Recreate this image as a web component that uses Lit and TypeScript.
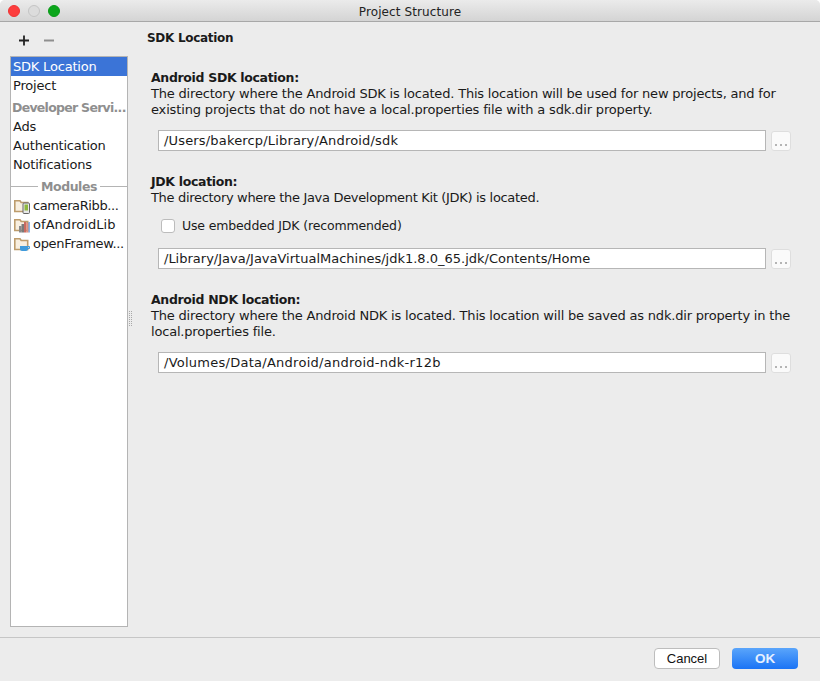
import { LitElement, html, css, svg } from "lit";
import { customElement } from "lit/decorators.js";

const folder = (inner: unknown) => html`<svg class="mi" viewBox="0 0 16 16" width="16" height="16">
  <path d="M0.800 2.800h5.200l1.200 1.700h6.500v9H0.800z" fill="#f8efe0" stroke="#bd9c6c" stroke-width="1.600"/>
  ${inner}
</svg>`;

const androidIcon = svg`<rect x="9" y="5" width="6.500" height="10.500" rx="1" fill="#e8e8e8" stroke="#666"/><rect x="10.500" y="6.500" width="3.500" height="6" fill="#8fb83c"/>`;
const libIcon = svg`<rect x="5" y="9" width="2.500" height="6.500" fill="#8a8a8a"/><rect x="7.500" y="7" width="2.500" height="8.500" fill="#7a7a7a"/><rect x="10" y="5" width="2.500" height="10.500" fill="#c96a60"/><rect x="12.500" y="6" width="2" height="9.500" fill="#e08f7c"/><rect x="14.500" y="5" width="1.200" height="10.500" fill="#5b93d6"/>`;
const cupIcon = svg`<path d="M6 10h8v3q0 2-2 2H8q-2 0-2-2z" fill="#3f9bdc"/><path d="M14 10.500h1.500v2H14" fill="none" stroke="#3f9bdc"/>`;

@customElement("app-root")
export class AppRoot extends LitElement {
  static styles = css`
    :host { display: block; width: 820px; height: 681px; font-family: "DejaVu Sans", sans-serif; font-size: 13px; color: #1a1a1a; }
    .win { width: 820px; height: 681px; display: flex; flex-direction: column; background: #ececec; border-radius: 5px 5px 0 0; overflow: hidden; }
    .title { height: 22px; box-sizing: border-box; flex: none; position: relative; display: flex; align-items: center; justify-content: center; padding-top: 2px; background: linear-gradient(#ebebeb, #d4d4d4); border-bottom: 1px solid #a8a8a8; font-size: 12px; letter-spacing: 0.1px; color: #222; }
    .lights { position: absolute; left: 8px; top: 5px; display: flex; gap: 8px; }
    .light { width: 12px; height: 12px; border-radius: 50%; box-sizing: border-box; }
    .red { background: #fc3d3d; border: 1px solid #e33; }
    .grey { background: #dcdcdc; border: 1px solid #c4c4c4; }
    .green { background: #0ca61c; border: 1px solid #0a9a18; }
    .body { flex: 1; display: flex; min-height: 0; }
    .side { width: 118px; margin-left: 10px; display: flex; flex-direction: column; flex: none; }
    .tools { height: 34px; display: flex; gap: 15px; padding: 13px 0 0 9px; box-sizing: border-box; flex: none; }
    .tools svg { display: block; }
    .list { height: 571px; background: #fff; border: 1px solid #b4b4b4; box-sizing: border-box; letter-spacing: -0.2px; overflow: hidden; }
    .row { height: 19px; line-height: 19px; padding-left: 2px; white-space: nowrap; }
    .sel { background: #3b74d7; color: #fff; }
    .section { margin-top: 3px; height: 19px; line-height: 19px; padding-left: 1px; font-weight: bold; color: #8f8f8f; white-space: nowrap; letter-spacing: -0.72px; font-size: 12.5px; }
    .sep { display: flex; align-items: center; gap: 3px; height: 22px; padding-top: 2px; box-sizing: border-box; font-weight: bold; color: #8f8f8f; font-size: 12.5px; letter-spacing: -0.45px; }
    .sep::before, .sep::after { content: ""; flex: 1; height: 1px; background: #b4b4b4; }
    .mod { height: 19px; line-height: 19px; display: flex; align-items: center; gap: 3px; padding-left: 3px; white-space: nowrap; letter-spacing: -0.3px; }
    .mod .wide { letter-spacing: 0.05px; }
    .mod .narrow { letter-spacing: -0.4px; }
    .mi { flex: none; }
    .grip { width: 23px; flex: none; display: flex; align-items: center; justify-content: flex-start; padding-left: 1px; box-sizing: border-box; }
    .dots { width: 4px; height: 15px; margin-top: -22px; background-image: radial-gradient(circle at 0.5px 0.5px, #a8a8a8 0.5px, transparent 0.7px); background-size: 2px 2px; }
    .main { flex: 1; min-width: 0; display: flex; flex-direction: column; }
    .head { font-weight: bold; font-size: 12px; letter-spacing: -0.3px; margin: 9px 0 0 -4px; height: 15px; line-height: 15px; }
    .t { font-weight: bold; font-size: 12.5px; letter-spacing: -0.33px; line-height: 15px; height: 16px; }
    .d { line-height: 16px; font-size: 13px; letter-spacing: -0.19px; white-space: nowrap; }
    .d.l2 { letter-spacing: -0.155px; }
    .d.jdk { letter-spacing: -0.32px; }
    .a { margin-top: 24px; }
    .b { margin-top: 23px; }
    .c { margin-top: 23px; }
    .field { display: flex; align-items: center; gap: 5px; padding-left: 7px; margin-top: 12px; }
    .field.after { margin-top: 14px; }
    .input { width: 608px; height: 21px; box-sizing: border-box; background: #fff; border: 1px solid #b6b6b6; line-height: 19px; padding-left: 5px; font-size: 13px; white-space: nowrap; }
    .input.sdk { letter-spacing: 0.17px; }
    .input.ndk { letter-spacing: 0.26px; }
    .more { width: 20px; height: 20px; box-sizing: border-box; background: #fafafa; border: 1px solid #dedede; border-radius: 3px; display: flex; align-items: flex-end; justify-content: center; gap: 3px; padding-bottom: 4px; }
    .more i { width: 2px; height: 2px; background: #b4b4b4; display: block; }
    .check { display: flex; align-items: center; gap: 7px; margin: 11px 0 0 10px; height: 17px; font-size: 12.5px; letter-spacing: -0.15px; }
    .box { width: 14px; height: 14px; box-sizing: border-box; background: #fff; border: 1px solid #bcbcbc; border-radius: 3px; flex: none; }
    .foot { height: 44px; flex: none; border-top: 1px solid #c6c6c6; display: flex; justify-content: flex-end; align-items: flex-start; gap: 12px; padding: 10px 22px 0 0; box-sizing: border-box; }
    .btn { width: 66px; height: 21px; box-sizing: border-box; border-radius: 4px; display: flex; align-items: center; justify-content: center; font-family: "Liberation Sans", sans-serif; font-size: 13px; }
    .cancel { background: #fff; border: 1px solid #bdbdbd; color: #111; }
    .ok { background: linear-gradient(#5aa5fb, #1b74f5); color: #e6f0ff; font-weight: bold; font-size: 13.5px; }
  `;

  render() {
    return html`<div class="win">
      <div class="title">
        <div class="lights"><span class="light red"></span><span class="light grey"></span><span class="light green"></span></div>
        Project Structure
      </div>
      <div class="body">
        <div class="side">
          <div class="tools">
            <svg width="10" height="11" viewBox="0 0 10 11"><path d="M5 0.500v10M0 5.500h10" stroke="#222" stroke-width="1.800"/></svg>
            <svg width="10" height="11" viewBox="0 0 10 11"><path d="M0 5.500h10" stroke="#8f8f8f" stroke-width="1.800"/></svg>
          </div>
          <div class="list">
            <div class="row sel">SDK Location</div>
            <div class="row">Project</div>
            <div class="section">Developer Servi...</div>
            <div class="row">Ads</div>
            <div class="row">Authentication</div>
            <div class="row">Notifications</div>
            <div class="sep">Modules</div>
            <div class="mod">${folder(androidIcon)}<span class="narrow">cameraRibb...</span></div>
            <div class="mod">${folder(libIcon)}<span class="wide">ofAndroidLib</span></div>
            <div class="mod">${folder(cupIcon)}<span>openFramew...</span></div>
          </div>
        </div>
        <div class="grip"><div class="dots"></div></div>
        <div class="main">
          <div class="head">SDK Location</div>
          <div class="t a">Android SDK location:</div>
          <div class="d">The directory where the Android SDK is located. This location will be used for new projects, and for</div>
          <div class="d l2">existing projects that do not have a local.properties file with a sdk.dir property.</div>
          <div class="field"><div class="input sdk">/Users/bakercp/Library/Android/sdk</div><div class="more"><i></i><i></i><i></i></div></div>
          <div class="t b">JDK location:</div>
          <div class="d jdk">The directory where the Java Development Kit (JDK) is located.</div>
          <div class="check"><span class="box"></span><span>Use embedded JDK (recommended)</span></div>
          <div class="field after"><div class="input">/Library/Java/JavaVirtualMachines/jdk1.8.0_65.jdk/Contents/Home</div><div class="more"><i></i><i></i><i></i></div></div>
          <div class="t c">Android NDK location:</div>
          <div class="d">The directory where the Android NDK is located. This location will be saved as ndk.dir property in the</div>
          <div class="d">local.properties file.</div>
          <div class="field"><div class="input ndk">/Volumes/Data/Android/android-ndk-r12b</div><div class="more"><i></i><i></i><i></i></div></div>
        </div>
      </div>
      <div class="foot">
        <div class="btn cancel">Cancel</div>
        <div class="btn ok">OK</div>
      </div>
    </div>`;
  }
}
